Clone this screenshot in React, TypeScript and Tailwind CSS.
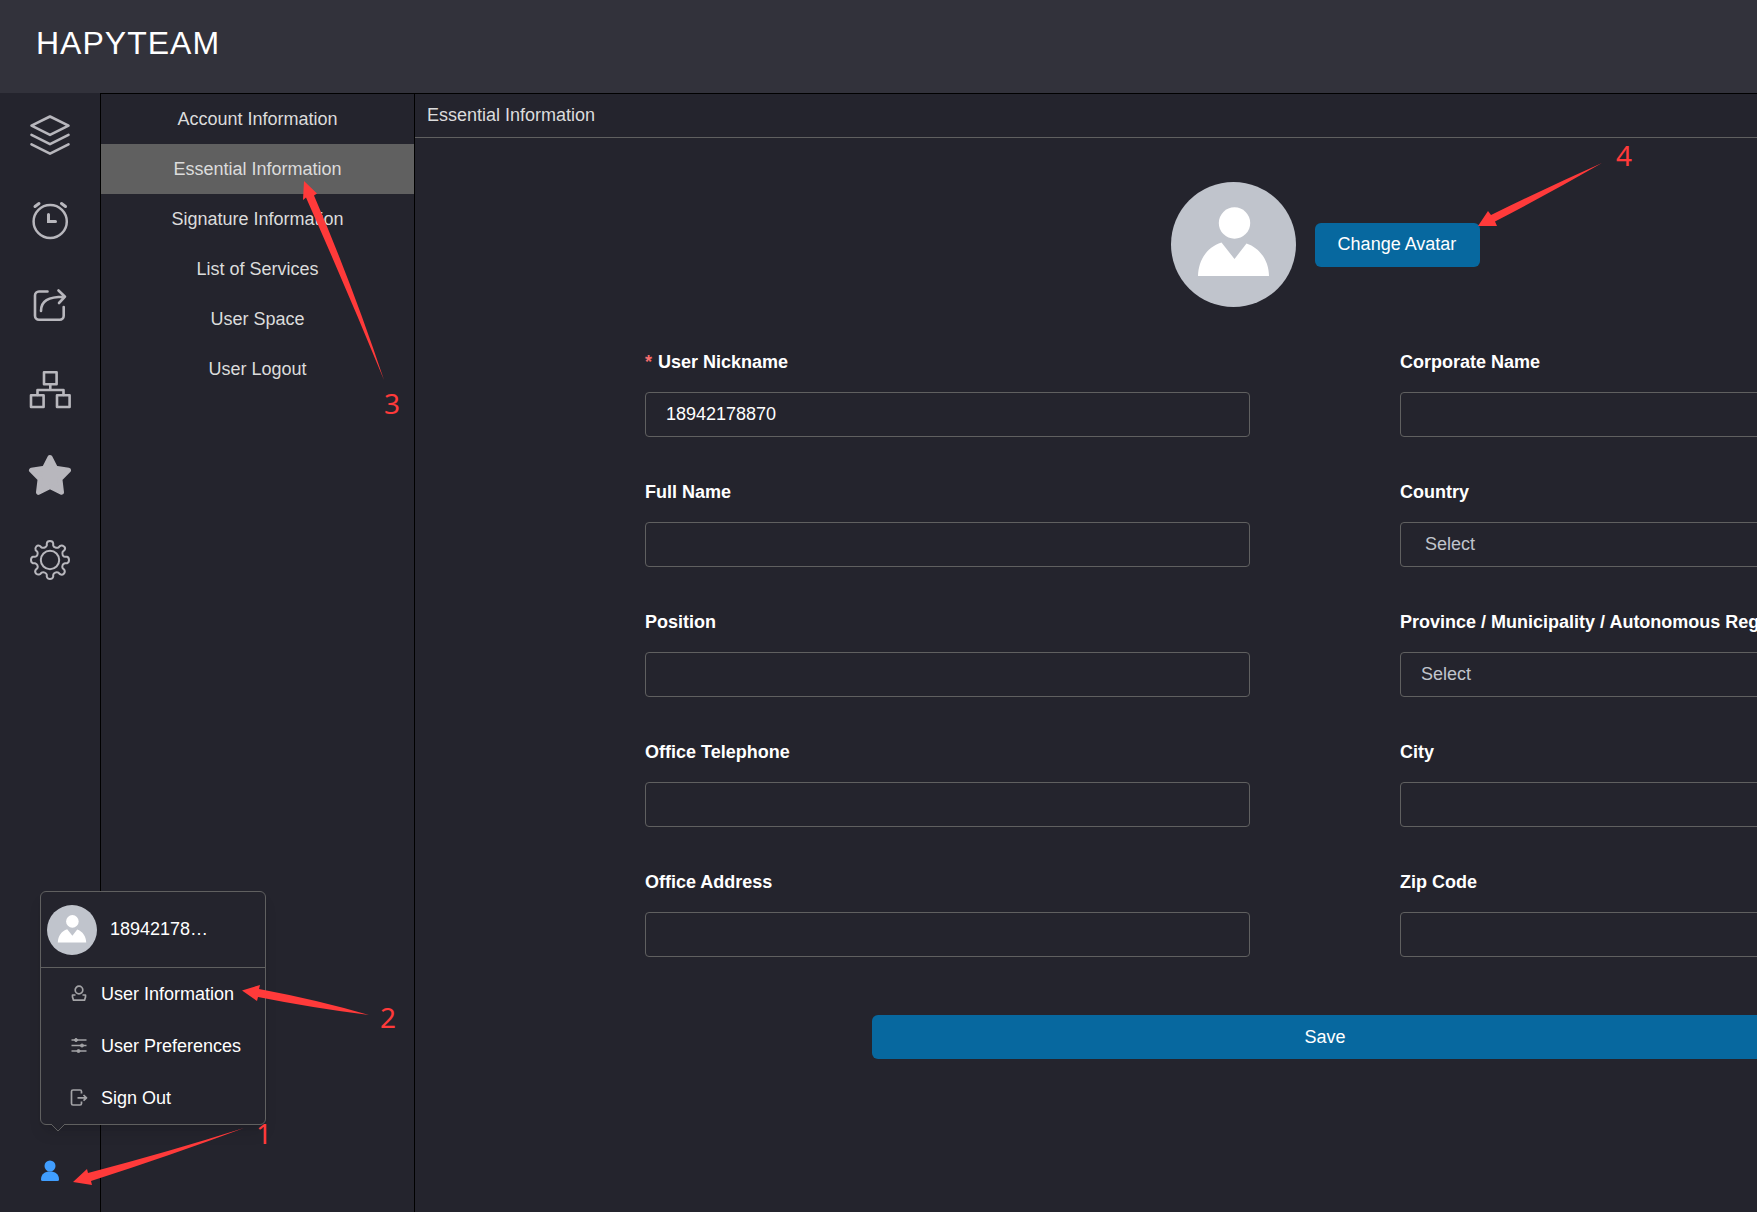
import type { ReactNode } from "react";

const railIcons: { label: string; icon: ReactNode }[] = [
  {
    label: "Projects",
    icon: (
      <g strokeWidth="2.6">
        <path d="M22 3.500 40.500 12.700 22 21.900 3.500 12.700Z" />
        <path d="M3.500 21.900 22 31.200 40.500 21.900" />
        <path d="M3.500 31.300 22 40.600 40.500 31.300" />
      </g>
    ),
  },
  {
    label: "Reminders",
    icon: (
      <g strokeWidth="2.5">
        <circle cx="22.200" cy="23.500" r="16.600" />
        <path d="M7 8.500 11 5.500M37.500 8.500 33.500 5.500" strokeWidth="3" />
        <path d="M20.500 16.500V23.500H27.500" strokeWidth="3" strokeLinejoin="miter" />
      </g>
    ),
  },
  {
    label: "Share",
    icon: (
      <g strokeWidth="2.6">
        <path d="M19.500 8.500H11A4 4 0 0 0 7 12.500V32.700A4 4 0 0 0 11 36.700H31.700A4 4 0 0 0 35.700 32.700V24" />
        <path d="M13 28C13 18 20 13.700 36 13.700M30.500 7.500 37 13.700 31 20" />
      </g>
    ),
  },
  {
    label: "Organization",
    icon: (
      <g strokeWidth="2.6">
        <rect x="16" y="4.300" width="12.600" height="12" />
        <rect x="3" y="27.300" width="12.600" height="11.700" />
        <rect x="29" y="27.300" width="12.600" height="11.700" />
        <path d="M22.300 16.500V22M9.500 27V22H35.500V27" />
      </g>
    ),
  },
  {
    label: "Favorites",
    icon: (
      <path
        fill="currentColor"
        strokeWidth="5"
        d="M22 4.500 27.500 15.200 40.500 17.300 31.900 26 33.500 39.300 22 33.500 10.500 39.300 12.100 26 3.500 17.300 16.500 15.200Z"
      />
    ),
  },
  {
    label: "Settings",
    icon: (
      <g strokeWidth="2">
        <circle cx="22" cy="22" r="9.200" />
        <path d="M18.800 5.500Q19 3 22 3T25.200 5.500V7.500Q25.500 9 27.300 9.500T30.500 9.500L32 8Q34 7 36 8.500T36.300 12.300L34.700 13.700Q34 15.500 34.700 17.200T37 18.800H39Q41 19.500 41 22T39 25.200H37Q35.300 25.500 34.600 27.200T34.700 30.300L36.300 31.800Q37.500 34 35.800 35.700T32 36.200L30.500 34.700Q29 33.800 27.200 34.600T25.200 36.800V38.800Q24.500 41 22 41T18.800 38.800V36.800Q18.500 35.200 16.800 34.600T13.500 34.700L12 36.200Q10 37.200 8.200 35.700T7.700 31.800L9.300 30.300Q10.200 28.800 9.400 27.200T7 25.200H5Q3 24.500 3 22T5 18.800H7Q8.800 18.500 9.400 16.800T9.300 13.700L7.700 12.300Q6.800 10 8.400 8.400T12 8L13.500 9.500Q15.200 10.200 16.800 9.500T18.800 7.500Z" />
      </g>
    ),
  },
];

const navItems = [
  "Account Information",
  "Essential Information",
  "Signature Information",
  "List of Services",
  "User Space",
  "User Logout",
];

const menuItems: { label: string; icon: ReactNode }[] = [
  {
    label: "User Information",
    icon: (
      <>
        <circle cx="9" cy="5" r="3.800" />
        <path d="M5.500 10H2.500V12L3.500 15.200H14.500L15.500 12V10H12.500" />
      </>
    ),
  },
  {
    label: "User Preferences",
    icon: (
      <>
        <path d="M1.500 3H16.500M1.500 8.500H16.500M1.500 14H16.500" />
        <g fill="currentColor" strokeWidth="1">
          <circle cx="6" cy="3" r="1.500" />
          <circle cx="12" cy="8.500" r="1.500" />
          <circle cx="8.500" cy="14" r="1.500" />
        </g>
      </>
    ),
  },
  {
    label: "Sign Out",
    icon: (
      <path d="M11.500 4.500V2.500Q11.500 1 10 1H3Q1.500 1 1.500 2.500V14.500Q1.500 16 3 16H10Q11.500 16 11.500 14.500V12.500M7.500 8.800H16.500M13.500 6 16.500 8.800 13.500 11.600" />
    ),
  },
];

type FieldProps = {
  id: string;
  label: string;
  required?: boolean;
  value?: string;
  select?: "wide" | "narrow";
};

const fields: FieldProps[] = [
  { id: "nickname", label: "User Nickname", required: true, value: "18942178870" },
  { id: "corporate", label: "Corporate Name" },
  { id: "fullName", label: "Full Name" },
  { id: "country", label: "Country", select: "wide" },
  { id: "position", label: "Position" },
  { id: "province", label: "Province / Municipality / Autonomous Region", select: "narrow" },
  { id: "telephone", label: "Office Telephone" },
  { id: "city", label: "City" },
  { id: "address", label: "Office Address" },
  { id: "zip", label: "Zip Code" },
];

const Field = ({ id, label, required, value, select }: FieldProps) => (
  <div>
    <label htmlFor={id} className="mb-4 block h-7 leading-7 font-bold whitespace-nowrap text-white">
      {required && <span className="mr-[6px] text-[#f56c6c]">*</span>}
      {label}
    </label>
    {select ? (
      <select
        id={id}
        className={
          select === "wide"
            ? "block h-[45px] w-full appearance-none rounded border border-[#606060] bg-transparent pl-6 text-[#c0c4cc]"
            : "block h-[45px] w-full appearance-none rounded border border-[#606060] bg-transparent pl-5 text-[#c0c4cc]"
        }
      >
        <option>Select</option>
      </select>
    ) : (
      <input
        id={id}
        type="text"
        defaultValue={value}
        className="block h-[45px] w-full rounded border border-[#606060] bg-transparent px-5 text-white"
      />
    )}
  </div>
);

const Avatar = ({ className }: { className: string }) => (
  <svg viewBox="0 0 125 125" className={className} aria-hidden="true">
    <circle cx="62.500" cy="62.500" r="62.500" fill="#c0c4cc" />
    <circle cx="63.500" cy="41" r="15.700" fill="#fff" />
    <path d="M27 94C27.500 78 36 65 50.500 60.500L63.500 77 75.500 61.500C89 66 98 79 98 94Z" fill="#fff" />
  </svg>
);

const Annotations = () => (
  <div className="pointer-events-none absolute inset-0 text-[28px] leading-8 text-[#ff3a3a]">
    <svg className="absolute top-0 left-0 h-[1212px] w-[1757px]" fill="currentColor" aria-hidden="true">
      <path d="M304 181 317 193.500 314 195.500Q352 284 384 380 347 290 306 197.500L303 200Z" />
      <path d="M242 990.500 260 985 259 989Q318 1000 369 1015 313 1008 258 997L257 1001Z" />
      <path d="M73 1182 87 1169 88 1173Q168 1152 244 1128 169 1156 91 1181L92 1185Z" />
      <path d="M1478 226 1488 211 1491 215Q1548 187 1602 163 1550 193 1495 221.500L1497 226Z" />
    </svg>
    <span className="absolute top-[387px] left-[384px] font-['Noto_Sans',sans-serif]">3</span>
    <span className="absolute top-[1001px] left-[380px] font-['Noto_Sans',sans-serif]">2</span>
    <span className="absolute top-[1117px] left-[256px] font-['Noto_Sans',sans-serif]">1</span>
    <span className="absolute top-[139px] left-[1616px] font-['Noto_Sans',sans-serif]">4</span>
  </div>
);

const UserMenu = () => (
  <div className="absolute bottom-[87px] left-10 w-[226px] rounded-md border border-[#606060] bg-[#24242d] shadow-lg">
    <div className="flex h-[76px] items-center gap-[13px] border-b border-[#606060] pl-[6px] text-white">
      <Avatar className="size-[50px]" />
      <span>18942178…</span>
    </div>
    <ul>
      {menuItems.map(({ label, icon }) => (
        <li key={label}>
          <button type="button" className="flex h-[52px] w-full items-center gap-[13px] pl-[29px] text-white">
            <svg
              viewBox="0 0 18 18"
              className="size-[18px] text-[#a3a3a6]"
              fill="none"
              stroke="currentColor"
              strokeWidth="1.7"
              strokeLinejoin="round"
            >
              {icon}
            </svg>
            {label}
          </button>
        </li>
      ))}
    </ul>
    <svg viewBox="0 0 14 8" className="absolute top-full left-[10px] h-2 w-[14px]" aria-hidden="true">
      <path d="M0 0 7 7 14 0" fill="#24242d" stroke="#606060" />
    </svg>
  </div>
);

const App = () => (
  <div className="relative flex h-screen flex-col overflow-hidden bg-[#24242d] font-['Liberation_Sans',Arial,sans-serif] text-[18px] text-[#dcdcdc]">
    <header className="flex h-[93px] shrink-0 items-center bg-[#32323b] pb-2 pl-9">
      <h1 className="text-[32px] tracking-[1px] text-white">HAPYTEAM</h1>
    </header>
    <div className="flex min-h-0 flex-1">
      <nav className="flex w-[100px] shrink-0 flex-col items-center pt-5 text-[#b8b7bd]">
        <div className="flex flex-col gap-[41px]">
          {railIcons.map(({ label, icon }) => (
            <a key={label} href="#" aria-label={label}>
              <svg
                viewBox="0 0 44 44"
                className="size-11"
                fill="none"
                stroke="currentColor"
                strokeLinecap="round"
                strokeLinejoin="round"
              >
                {icon}
              </svg>
            </a>
          ))}
        </div>
        <button type="button" aria-label="User" className="mt-auto mb-[30px] text-[#409eff]">
          <svg viewBox="0 0 18 22" className="h-[22px] w-[18px]" fill="currentColor">
            <circle cx="9" cy="6" r="5.500" />
            <path d="M0 19.500C0 14 4 11.500 9 11.500S18 14 18 19.500Q18 21 16.500 21H1.500Q0 21 0 19.500Z" />
          </svg>
        </button>
      </nav>
      <aside className="w-[315px] shrink-0 border-x border-t border-black">
        {navItems.map((item) => (
          <a
            key={item}
            href="#"
            className={
              item === "Essential Information"
                ? "block h-[50px] bg-[#606060] text-center leading-[50px]"
                : "block h-[50px] text-center leading-[50px]"
            }
          >
            {item}
          </a>
        ))}
      </aside>
      {/* the form is wider than most windows and runs off to the right */}
      <main className="min-w-[1820px] flex-1 border-t border-black">
        <h2 className="h-11 border-b border-[#606060] pl-3 leading-[42px]">Essential Information</h2>
        <form className="px-[230px] pt-11">
          <div className="mb-[41px] flex items-center justify-center gap-[19px]">
            <Avatar className="size-[125px]" />
            <button type="button" className="h-11 w-[165px] rounded-md bg-[#07689f] text-white">
              Change Avatar
            </button>
          </div>
          <div className="grid grid-cols-2 gap-x-[150px] gap-y-[41px]">
            {fields.map((field) => (
              <Field key={field.id} {...field} />
            ))}
          </div>
          <div className="mt-[58px] flex justify-center">
            <button type="submit" className="h-11 w-2/3 rounded-md bg-[#07689f] text-white">
              Save
            </button>
          </div>
        </form>
      </main>
    </div>
    <UserMenu />
    <Annotations />
  </div>
);

export default App;
